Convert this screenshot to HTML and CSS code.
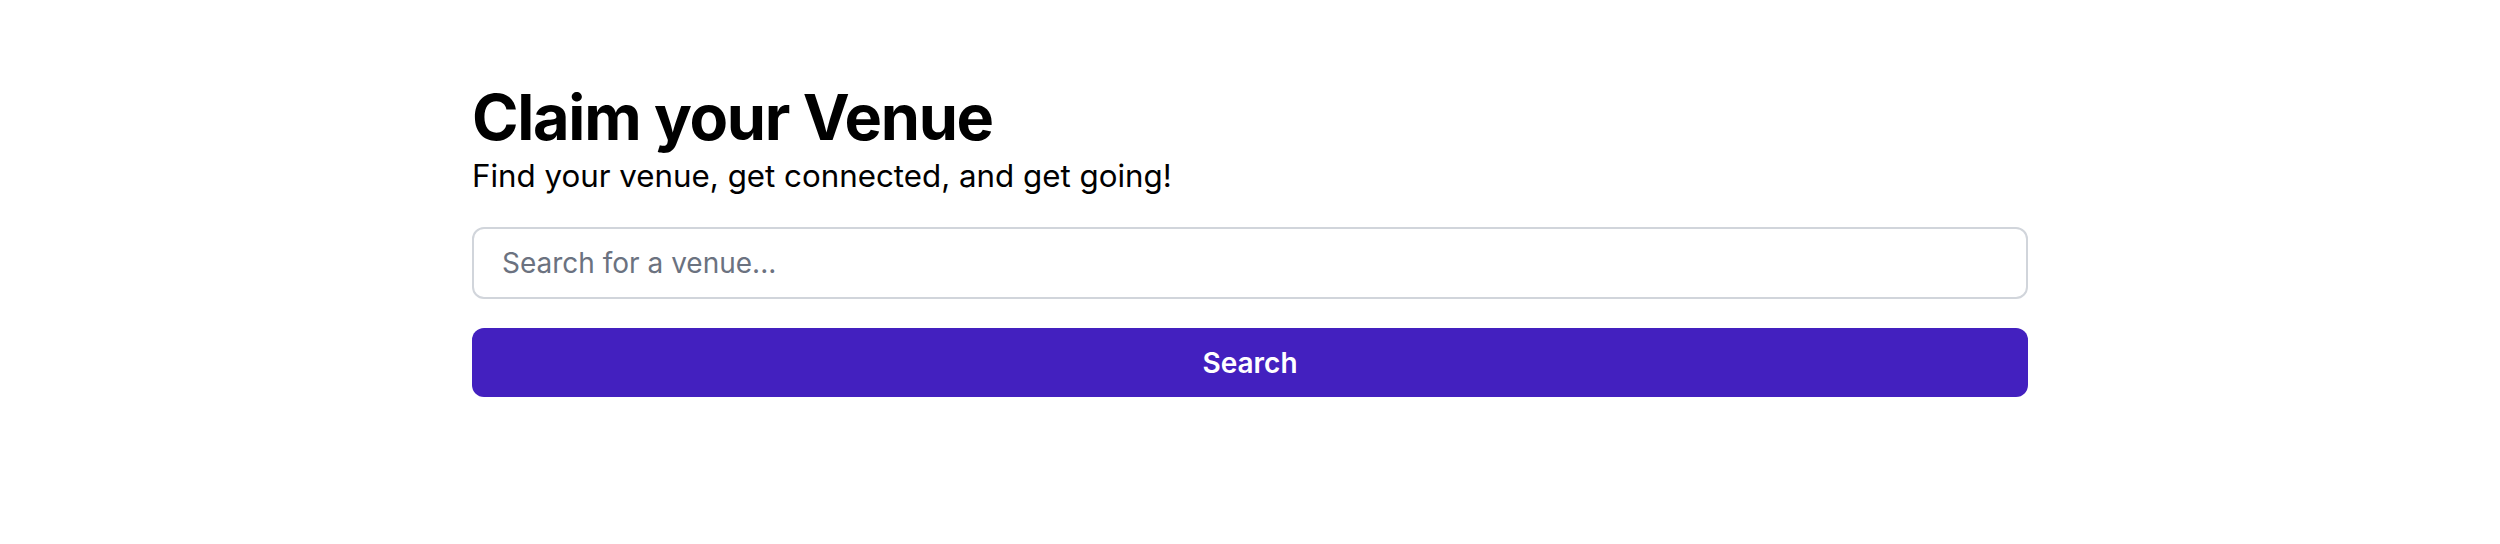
FILE: index.html
```html
<!DOCTYPE html>
<html lang="en">
<head>
<meta charset="utf-8">
<title>Claim your Venue</title>
<link rel="stylesheet" href="styles.css">
</head>
<body>
<main class="page">
  <section class="claim">
    <h1 class="claim-title">Claim your Venue</h1>
    <p class="claim-sub">Find your venue, get connected, and get going!</p>
    <form class="claim-form">
      <input class="claim-input" type="text" placeholder="Search for a venue...">
      <button class="claim-btn" type="button">Search</button>
    </form>
  </section>
</main>
</body>
</html>
```
FILE: styles.css
```css
* { box-sizing: border-box; }
html, body { margin: 0; padding: 0; background: #ffffff; }
body { font-family: Inter, "Noto Sans", sans-serif; color: #000; }
.page { padding-top: 82px; }
.claim { width: 1556px; margin: 0 auto; }
.claim-title {
  margin: 0;
  font-family: Inter, sans-serif;
  font-weight: 700;
  font-size: 63px;
  line-height: 70px;
  letter-spacing: -1.3px;
}
.claim-sub {
  margin: 0;
  font-size: 31.3px;
  line-height: 49px;
  font-weight: 400;
}
.claim-form {
  margin-top: 26px;
  display: flex;
  flex-direction: column;
  gap: 29px;
}
.claim-input {
  height: 72px;
  border: 2px solid #d1d5db;
  border-radius: 12px;
  padding: 0 28px;
  font-family: Inter, sans-serif;
  font-size: 28px;
  color: #111827;
  outline: none;
}
.claim-input::placeholder { color: #6b7280; }
.claim-btn {
  height: 69px;
  border: none;
  border-radius: 12px;
  background: #4320bf;
  color: #fff;
  font-family: Inter, sans-serif;
  font-size: 28px;
  font-weight: 600;
}
```
